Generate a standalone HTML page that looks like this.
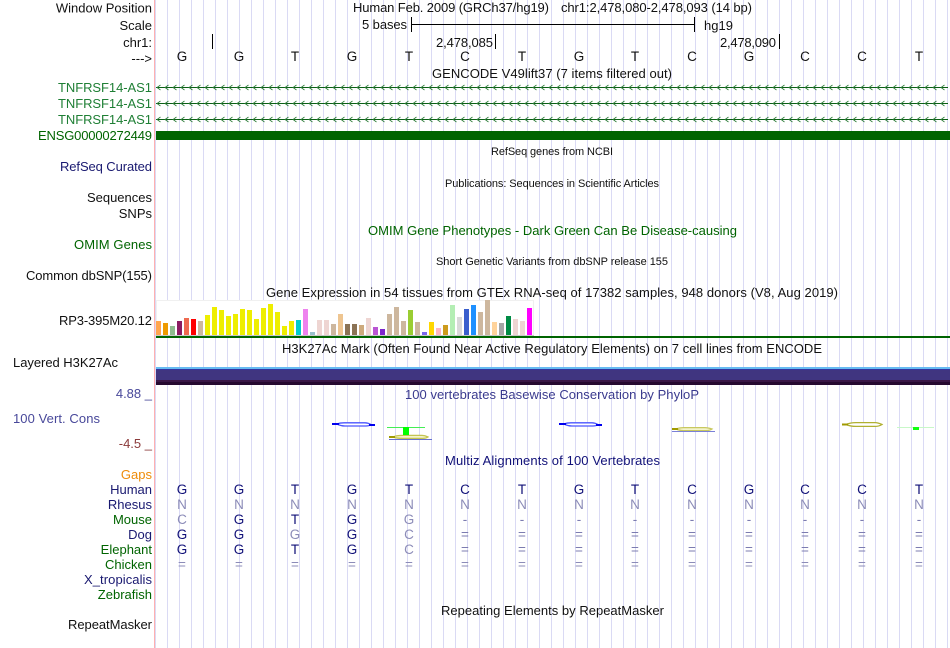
<!DOCTYPE html>
<html><head><meta charset="utf-8"><style>
html,body{margin:0;padding:0;background:#fff;width:950px;height:648px;overflow:hidden}
svg{display:block}
text{font-family:"Liberation Sans",sans-serif;font-size:13px;fill:#111;filter:blur(.25px)}
.r{text-anchor:end}
.m{text-anchor:middle;font-size:13.5px}
.s{font-size:11px}
.g{fill:#006400}
.n{fill:#191970}
.b{fill:#101078}
.l{fill:#8c8cb8}
.e{fill:#7c7cb0}
rect.c{shape-rendering:crispEdges}
</style></head><body>
<svg width="950" height="648" viewBox="0 0 950 648" xmlns="http://www.w3.org/2000/svg">
<defs>
<pattern id="grid" patternUnits="userSpaceOnUse" x="167" y="0" width="12" height="648"><rect x="0" y="0" width="1" height="648" fill="#dadaf4"/></pattern>
<pattern id="chev" patternUnits="userSpaceOnUse" x="156" y="3.5" width="8" height="8"><path d="M4.5 1.5L1 4L4.5 6.5" fill="none" stroke="#2a7a35" stroke-width="0.8"/></pattern>
</defs>
<rect class="c" x="155" y="0" width="795" height="648" fill="url(#grid)"/>
<rect class="c" x="154" y="0" width="1" height="648" fill="#ffb0b0"/>

<!-- labels -->
<text class="r" x="152" y="12.5">Window Position</text>
<text class="r" x="152" y="30">Scale</text>
<text class="r" x="152" y="47">chr1:</text>
<text class="r" x="152" y="63">---&gt;</text>
<text x="58" y="92" textLength="94" style="fill:#1f7f35">TNFRSF14-AS1</text>
<text x="58" y="108" textLength="94" style="fill:#1f7f35">TNFRSF14-AS1</text>
<text x="58" y="124" textLength="94" style="fill:#1f7f35">TNFRSF14-AS1</text>
<text class="g" x="38" y="140" textLength="114">ENSG00000272449</text>
<text class="n" x="60" y="171" textLength="92">RefSeq Curated</text>
<text class="r" x="152" y="202">Sequences</text>
<text class="r" x="152" y="218">SNPs</text>
<text class="g" x="74" y="249" textLength="78">OMIM Genes</text>
<text x="26" y="280" textLength="126">Common dbSNP(155)</text>
<text x="59" y="325" textLength="93">RP3-395M20.12</text>
<text x="13" y="367" textLength="105">Layered H3K27Ac</text>
<text class="r" x="152" y="398" style="fill:#48489a">4.88 _</text>
<text x="13" y="423" textLength="87" style="fill:#48489a">100 Vert. Cons</text>
<text class="r" x="152" y="448" style="fill:#8b3a3a">-4.5 _</text>
<text class="r" x="152" y="479" style="fill:#ee8c0a">Gaps</text>
<text class="r n" x="152" y="494">Human</text>
<text class="r n" x="152" y="509">Rhesus</text>
<text class="r g" x="152" y="524">Mouse</text>
<text class="r n" x="152" y="539">Dog</text>
<text class="r g" x="152" y="554">Elephant</text>
<text class="r g" x="152" y="569">Chicken</text>
<text class="n" x="84" y="584" textLength="68">X_tropicalis</text>
<text class="r g" x="152" y="599">Zebrafish</text>
<text x="68" y="629" textLength="84">RepeatMasker</text>

<!-- header -->
<text x="353" y="12" textLength="196">Human Feb. 2009 (GRCh37/hg19)</text>
<text x="561" y="12" textLength="191">chr1:2,478,080-2,478,093 (14 bp)</text>
<text x="362" y="29" textLength="45">5 bases</text>
<rect class="c" x="411" y="24" width="283" height="1" fill="#000"/>
<rect class="c" x="411" y="17" width="1" height="15" fill="#000"/>
<rect class="c" x="694" y="17" width="1" height="15" fill="#000"/>
<text x="704" y="30" textLength="29">hg19</text>
<rect class="c" x="212" y="34" width="1" height="15" fill="#000"/>
<text x="436" y="47" textLength="57">2,478,085</text>
<rect class="c" x="495" y="34" width="1" height="15" fill="#000"/>
<text x="720" y="47" textLength="56">2,478,090</text>
<rect class="c" x="779" y="34" width="1" height="15" fill="#000"/>
<text class="m" y="61" x="182 239 295 352 409 465 522 579 635 692 749 805 862 919">GGTGTCTGTCGCCT</text>

<!-- gencode -->
<text x="432" y="78" textLength="240">GENCODE V49lift37 (7 items filtered out)</text>
<rect class="c" x="156" y="87" width="792" height="1" fill="#0a5f14"/>
<rect class="c" x="156" y="103" width="792" height="1" fill="#0a5f14"/>
<rect class="c" x="156" y="119" width="792" height="1" fill="#0a5f14"/>
<rect x="156" y="83.5" width="792" height="8" fill="url(#chev)"/>
<rect x="156" y="99.5" width="792" height="8" fill="url(#chev)"/>
<rect x="156" y="115.5" width="792" height="8" fill="url(#chev)"/>
<rect class="c" x="156" y="131" width="794" height="9" fill="#006400"/>

<text class="s" x="491" y="155" textLength="122">RefSeq genes from NCBI</text>
<text class="s" x="445" y="187" textLength="214">Publications: Sequences in Scientific Articles</text>
<text class="g" x="368" y="235" textLength="369">OMIM Gene Phenotypes - Dark Green Can Be Disease-causing</text>
<text class="s" x="436" y="265" textLength="232">Short Genetic Variants from dbSNP release 155</text>
<text x="266" y="297" textLength="572">Gene Expression in 54 tissues from GTEx RNA-seq of 17382 samples, 948 donors (V8, Aug 2019)</text>

<!-- GTEx -->
<rect class="c" x="156" y="300" width="378" height="36" fill="#fff"/>
<rect class="c" x="156" y="300" width="378" height="1" fill="#f0f0f0"/>
<rect class="c" x="156" y="300" width="1" height="36" fill="#f0f0f0"/>
<rect class="c" x="533" y="300" width="1" height="36" fill="#f0f0f0"/>
<g>
<rect class="c" x="156" y="321" width="5" height="14" fill="#FFA54F"/>
<rect class="c" x="163" y="323" width="5" height="12" fill="#EE9A00"/>
<rect class="c" x="170" y="326" width="5" height="9" fill="#8FBC8F"/>
<rect class="c" x="177" y="321" width="5" height="14" fill="#8B1C62"/>
<rect class="c" x="184" y="318" width="5" height="17" fill="#EE6A50"/>
<rect class="c" x="191" y="319" width="5" height="16" fill="#FF0000"/>
<rect class="c" x="198" y="321" width="5" height="14" fill="#CDB79E"/>
<rect class="c" x="205" y="315" width="5" height="20" fill="#EEEE00"/>
<rect class="c" x="212" y="307" width="5" height="28" fill="#EEEE00"/>
<rect class="c" x="219" y="310" width="5" height="25" fill="#EEEE00"/>
<rect class="c" x="226" y="316" width="5" height="19" fill="#EEEE00"/>
<rect class="c" x="233" y="314" width="5" height="21" fill="#EEEE00"/>
<rect class="c" x="240" y="309" width="5" height="26" fill="#EEEE00"/>
<rect class="c" x="247" y="310" width="5" height="25" fill="#EEEE00"/>
<rect class="c" x="254" y="319" width="5" height="16" fill="#EEEE00"/>
<rect class="c" x="261" y="308" width="5" height="27" fill="#EEEE00"/>
<rect class="c" x="268" y="304" width="5" height="31" fill="#EEEE00"/>
<rect class="c" x="275" y="312" width="5" height="23" fill="#EEEE00"/>
<rect class="c" x="282" y="326" width="5" height="9" fill="#EEEE00"/>
<rect class="c" x="289" y="321" width="5" height="14" fill="#EEEE00"/>
<rect class="c" x="296" y="320" width="5" height="15" fill="#00CDCD"/>
<rect class="c" x="303" y="309" width="5" height="26" fill="#EE82EE"/>
<rect class="c" x="310" y="332" width="5" height="3" fill="#9AC0CD"/>
<rect class="c" x="317" y="320" width="5" height="15" fill="#EED5D2"/>
<rect class="c" x="324" y="320" width="5" height="15" fill="#EED5D2"/>
<rect class="c" x="331" y="324" width="5" height="11" fill="#CDB79E"/>
<rect class="c" x="338" y="314" width="5" height="21" fill="#EEC591"/>
<rect class="c" x="345" y="324" width="5" height="11" fill="#8B7355"/>
<rect class="c" x="352" y="324" width="5" height="11" fill="#8B7355"/>
<rect class="c" x="359" y="325" width="5" height="10" fill="#CDAA7D"/>
<rect class="c" x="366" y="318" width="5" height="17" fill="#EED5D2"/>
<rect class="c" x="373" y="327" width="5" height="8" fill="#BA55D3"/>
<rect class="c" x="380" y="329" width="5" height="6" fill="#7D26CD"/>
<rect class="c" x="387" y="314" width="5" height="21" fill="#CDB79E"/>
<rect class="c" x="394" y="307" width="5" height="28" fill="#CDB79E"/>
<rect class="c" x="401" y="321" width="5" height="14" fill="#CDB79E"/>
<rect class="c" x="408" y="310" width="5" height="25" fill="#9ACD32"/>
<rect class="c" x="415" y="322" width="5" height="13" fill="#CDB79E"/>
<rect class="c" x="422" y="332" width="5" height="3" fill="#7A67EE"/>
<rect class="c" x="429" y="322" width="5" height="13" fill="#FFD700"/>
<rect class="c" x="436" y="328" width="5" height="7" fill="#FFB6C1"/>
<rect class="c" x="443" y="325" width="5" height="10" fill="#CD9B1D"/>
<rect class="c" x="450" y="305" width="5" height="30" fill="#B4EEB4"/>
<rect class="c" x="457" y="317" width="5" height="18" fill="#D9D9D9"/>
<rect class="c" x="464" y="309" width="5" height="26" fill="#3A5FCD"/>
<rect class="c" x="471" y="305" width="5" height="30" fill="#1E90FF"/>
<rect class="c" x="478" y="312" width="5" height="23" fill="#CDB79E"/>
<rect class="c" x="485" y="300" width="5" height="35" fill="#CDB79E"/>
<rect class="c" x="492" y="322" width="5" height="13" fill="#FFD39B"/>
<rect class="c" x="499" y="323" width="5" height="12" fill="#A6A6A6"/>
<rect class="c" x="506" y="316" width="5" height="19" fill="#008B45"/>
<rect class="c" x="513" y="319" width="5" height="16" fill="#EED5D2"/>
<rect class="c" x="520" y="321" width="5" height="14" fill="#EED5D2"/>
<rect class="c" x="527" y="308" width="5" height="27" fill="#FF00FF"/>
</g>
<rect class="c" x="156" y="335" width="378" height="1" fill="#c8c8c8"/>
<rect class="c" x="156" y="336" width="794" height="2" fill="#006400"/>

<!-- H3K27Ac -->
<text x="282" y="353" textLength="540">H3K27Ac Mark (Often Found Near Active Regulatory Elements) on 7 cell lines from ENCODE</text>
<rect class="c" x="156" y="367" width="794" height="2" fill="#66bbf2"/>
<rect class="c" x="156" y="369" width="794" height="1" fill="#3535a0"/>
<rect class="c" x="156" y="370" width="794" height="10" fill="#403580"/>
<rect class="c" x="156" y="380" width="794" height="2" fill="#3a1745"/>
<rect class="c" x="156" y="382" width="794" height="3" fill="#260a30"/>

<!-- conservation -->
<text x="405" y="399" textLength="294" style="fill:#3a3a8e">100 vertebrates Basewise Conservation by PhyloP</text>
<g stroke-width="1.3">
<path d="M337 424C340 422.8 342 422.8 344 422.8H365C367 422.8 369 423.4 371 424.6C369 426 368 426 366 426H345C342 426 340 425.6 337 424Z" fill="#fff" stroke="#4a55ff"/>
<path d="M564 424C567 422.8 569 422.8 571 422.8H592C594 422.8 596 423.4 598 424.6C596 426 595 426 593 426H572C569 426 567 425.6 564 424Z" fill="#fff" stroke="#4a55ff"/>
<path d="M393 437C396 435.4 400 435.4 403 435.4H422C424 435.4 426 436 428 437C426 438.4 425 438.4 423 438.4H403C400 438.4 396 438.2 393 437Z" fill="#f4f4cc" stroke="#c4c450"/>
<path d="M676 429C679 427.6 682 427.6 684 427.6H705C707 427.6 709 428 712 429C710 430.6 708 430.6 706 430.6H684C682 430.6 679 430.4 676 429Z" fill="#f4f4cc" stroke="#c8c860"/>
<path d="M846 424.5C850 422.6 853 422.6 856 422.6H875C877 422.6 879 423 882 424.5C879 426.4 877 426.4 875 426.4H856C853 426.4 850 426.2 846 424.5Z" fill="#fff" stroke="#b0b030"/>
</g>
<rect x="332" y="423" width="7" height="2" fill="#0000ee"/>
<rect x="369" y="424" width="6" height="2" fill="#0000ee"/>
<rect x="559" y="423" width="7" height="2" fill="#0000ee"/>
<rect x="596" y="424" width="6" height="2" fill="#0000ee"/>
<rect class="c" x="387" y="427" width="38" height="1" fill="#44ee55"/>
<rect class="c" x="403" y="427" width="6" height="8" fill="#00ff00"/>
<rect x="389" y="436" width="6" height="2" fill="#a09a00"/>
<rect class="c" x="389" y="439" width="43" height="1" fill="#6670d0"/>
<rect x="672" y="428" width="6" height="2" fill="#a09a00"/>
<rect class="c" x="672" y="431" width="43" height="1" fill="#7a80d8"/>
<rect x="842" y="423.5" width="6" height="2" fill="#a09a00"/>
<rect class="c" x="897" y="427" width="37" height="1" fill="#c8f8c8"/>
<rect class="c" x="913" y="427" width="6" height="3" fill="#11ff11"/>

<!-- multiz -->
<text x="445" y="465" textLength="215" style="fill:#101078">Multiz Alignments of 100 Vertebrates</text>
<text class="m b" y="494" x="182 239 295 352 409 465 522 579 635 692 749 805 862 919">GGTGTCTGTCGCCT</text>
<text class="m l" y="509" x="182 239 295 352 409 465 522 579 635 692 749 805 862 919">NNNNNNNNNNNNNN</text>
<text class="m b" y="524" x="239 295 352">GTG</text>
<text class="m l" y="524" x="182 409">CG</text>
<text class="m e" y="524" x="465 522 579 635 692 749 805 862 919">---------</text>
<text class="m b" y="539" x="182 239 352">GGG</text>
<text class="m l" y="539" x="295 409">GC</text>
<text class="m e" y="539" x="465 522 579 635 692 749 805 862 919">=========</text>
<text class="m b" y="554" x="182 239 295 352">GGTG</text>
<text class="m l" y="554" x="409">C</text>
<text class="m e" y="554" x="465 522 579 635 692 749 805 862 919">=========</text>
<text class="m l" y="569" x="182 239 295 352 409 465 522 579 635 692 749 805 862 919">==============</text>

<text x="441" y="615" textLength="223">Repeating Elements by RepeatMasker</text>
</svg>
</body></html>
